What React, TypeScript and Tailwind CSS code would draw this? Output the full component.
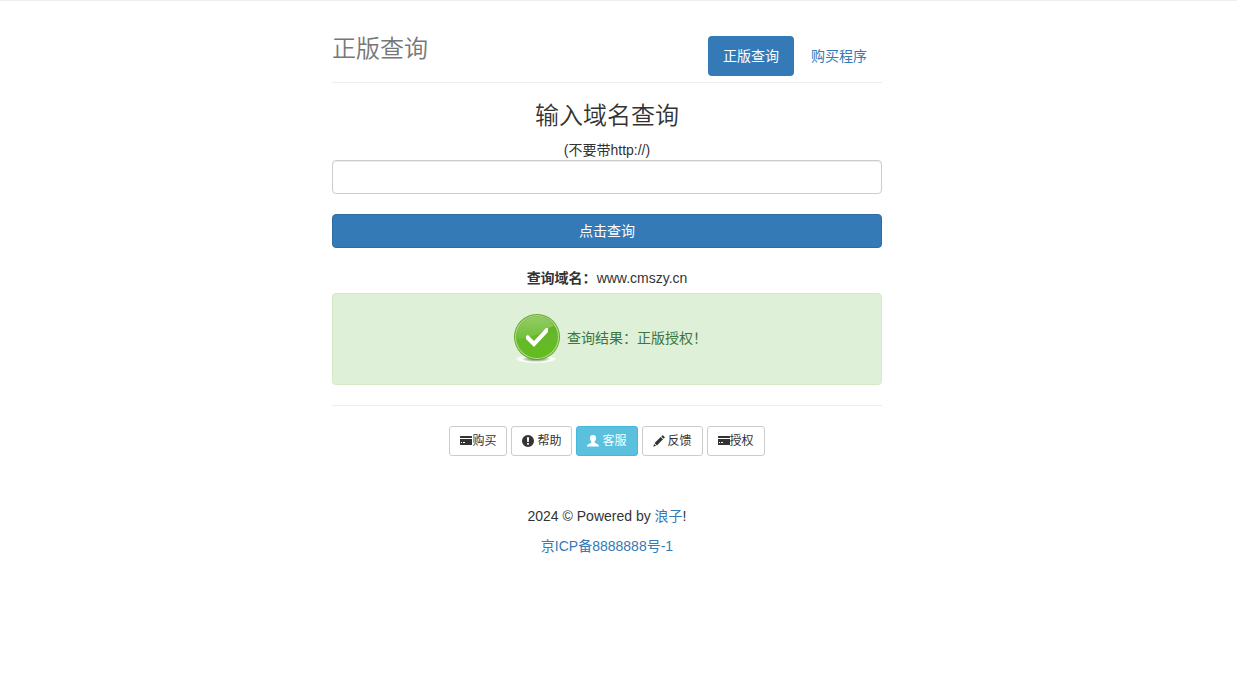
import React, { useState } from 'react';

const CardIcon: React.FC = () => (
  <svg viewBox="0 0 12 12" className="h-3 w-3" fill="currentColor" aria-hidden="true">
    <path d="M.5 1h11q.5 0 .5.5V3H0V1.500Q0 1 .5 1z" />
    <path fillRule="evenodd" d="M0 4h12v5.500q0 .5-.5.5H.5q-.5 0-.5-.5zM1 7v1h1V7zM3 7v1h2V7z" />
  </svg>
);

const AlertIcon: React.FC = () => (
  <svg viewBox="0 0 12 12" className="h-3 w-3" fill="currentColor" aria-hidden="true">
    <path fillRule="evenodd" d="M6 0a6 6 0 1 1 0 12A6 6 0 0 1 6 0zM4.900 2.200L5.200 7h1.600l.3-4.800zM5.100 8v1.700h1.800V8z" />
  </svg>
);

const UserIcon: React.FC = () => (
  <svg viewBox="0 0 12 12" className="h-3 w-3" fill="currentColor" aria-hidden="true">
    <path d="M6 0c1.900 0 3.100 1.300 3.100 3.100 0 1.500-.6 2.900-1.500 3.700v.8c.3.600 2.200 1.100 3.300 1.800.8.4 1.100.9 1.100 2.100H0c0-1.200.3-1.700 1.100-2.100 1.100-.7 3-1.200 3.300-1.800v-.8C3.500 6 2.900 4.600 2.900 3.100 2.900 1.300 4.100 0 6 0z" />
  </svg>
);

const PencilIcon: React.FC = () => (
  <svg viewBox="0 0 12 12" className="h-3 w-3" fill="currentColor" aria-hidden="true">
    <path d="M9.300.4q.4-.4.8 0l1.500 1.500q.4.4 0 .8l-1 1-2.300-2.300zM7.700 2L10 4.300 3.900 10.400 1.600 8.100zM1.200 8.900l1.900 1.900L.2 11.800z" />
  </svg>
);

const SuccessIcon: React.FC = () => (
  <svg viewBox="0 0 56 56" className="h-14 w-14" aria-hidden="true">
    <defs>
      <linearGradient id="ball" x1="0" y1="0" x2="0" y2="1">
        <stop offset="0" stopColor="#62ab2a" />
        <stop offset="0.5" stopColor="#66b82a" />
        <stop offset="1" stopColor="#62bd1c" />
      </linearGradient>
      <linearGradient id="gloss" x1="0" y1="0" x2="0" y2="1">
        <stop offset="0" stopColor="#94cc66" />
        <stop offset="1" stopColor="#70bf38" />
      </linearGradient>
      <radialGradient id="shadow">
        <stop offset="0" stopColor="#5f7554" />
        <stop offset="0.5" stopColor="#bcc9b4" />
        <stop offset="0.75" stopColor="#ffffff" />
        <stop offset="1" stopColor="#ffffff" stopOpacity="0.5" />
      </radialGradient>
    </defs>
    <ellipse cx="29" cy="49" rx="20" ry="4" fill="url(#shadow)" />
    <circle cx="30" cy="27" r="23" fill="#62a72f" />
    <circle cx="30" cy="27" r="22" fill="#b5df8e" />
    <circle cx="30" cy="27" r="21" fill="url(#ball)" />
    <path d="M10 29A20 20 0 0 1 47 16C39 18 31 28 10 29z" fill="url(#gloss)" />
    <path d="M19 26l2-1 6 6L39 18h2v4L27 37l-8-8z" fill="#fff" />
  </svg>
);

const navItems = [
  { label: '正版查询', active: true },
  { label: '购买程序', active: false },
];

const footerButtons = [
  { label: '购买', icon: <CardIcon />, spaced: false, info: false },
  { label: '帮助', icon: <AlertIcon />, spaced: true, info: false },
  { label: '客服', icon: <UserIcon />, spaced: true, info: true },
  { label: '反馈', icon: <PencilIcon />, spaced: true, info: false },
  { label: '授权', icon: <CardIcon />, spaced: false, info: false },
];

const App: React.FC = () => {
  const [domain, setDomain] = useState('');

  return (
    <div className="border-t border-[#eee] bg-white px-4 pr-[39px] font-['Liberation_Sans','Noto_Sans_CJK_SC',sans-serif] text-sm leading-5 text-[#333]">
      <div className="mx-auto max-w-[550px]">
        {/* Header */}
        <header className="flex items-start justify-between border-b border-[#eee] pt-[35px] pb-1.5">
          <h3 className="text-2xl leading-[26px] font-[350] text-[#777]">正版查询</h3>
          <nav className="flex gap-0.5">
            {navItems.map(item => (
              <a
                key={item.label}
                href="#"
                className={`rounded px-[15px] py-2.5 ${item.active ? 'bg-[#337ab7] text-white' : 'text-[#337ab7]'}`}
              >
                {item.label}
              </a>
            ))}
          </nav>
        </header>

        {/* Query form */}
        <form className="text-center" onSubmit={e => e.preventDefault()}>
          <h3 className="pt-5 pb-[11px] text-2xl leading-[26px] font-[350]">输入域名查询</h3>
          <label htmlFor="domain" className="block">(不要带http://)</label>
          <input
            id="domain"
            type="text"
            value={domain}
            onChange={e => setDomain(e.target.value)}
            className="block h-[34px] w-full rounded border border-[#ccc] px-3 shadow-[inset_0_1px_1px_rgba(0,0,0,0.075)]"
          />
          <button type="submit" className="mt-5 block h-[34px] w-full rounded border border-[#2e6da4] bg-[#337ab7] text-white">
            点击查询
          </button>
        </form>

        {/* Result */}
        <p className="mt-5 mb-[5px] text-center">
          <strong>查询域名：</strong>www.cmszy.cn
        </p>
        <div className="flex items-center justify-center gap-1 rounded border border-[#d6e9c6] bg-[#dff0d8] pt-4 pb-[18px] text-[#3c763d]">
          <SuccessIcon />
          <span>查询结果：正版授权！</span>
        </div>

        <hr className="my-5 border-[#eee]" />

        {/* Links */}
        <div className="flex flex-wrap justify-center gap-1 text-xs">
          {footerButtons.map(btn => (
            <button
              key={btn.label}
              type="button"
              className={`flex h-[30px] items-center rounded-[3px] border px-2.5 ${btn.spaced ? 'gap-[3px]' : ''} ${
                btn.info ? 'border-[#46b8da] bg-[#5bc0de] text-white' : 'border-[#ccc] bg-white'
              }`}
            >
              {btn.icon}
              {btn.label}
            </button>
          ))}
        </div>

        <footer className="mt-[50px] text-center">
          <p>
            2024 © Powered by <a href="#" className="text-[#337ab7]">浪子</a>!
          </p>
          <p className="mt-2.5">
            <a href="#" className="text-[#337ab7]">京ICP备8888888号-1</a>
          </p>
        </footer>
      </div>
    </div>
  );
};

export default App;
